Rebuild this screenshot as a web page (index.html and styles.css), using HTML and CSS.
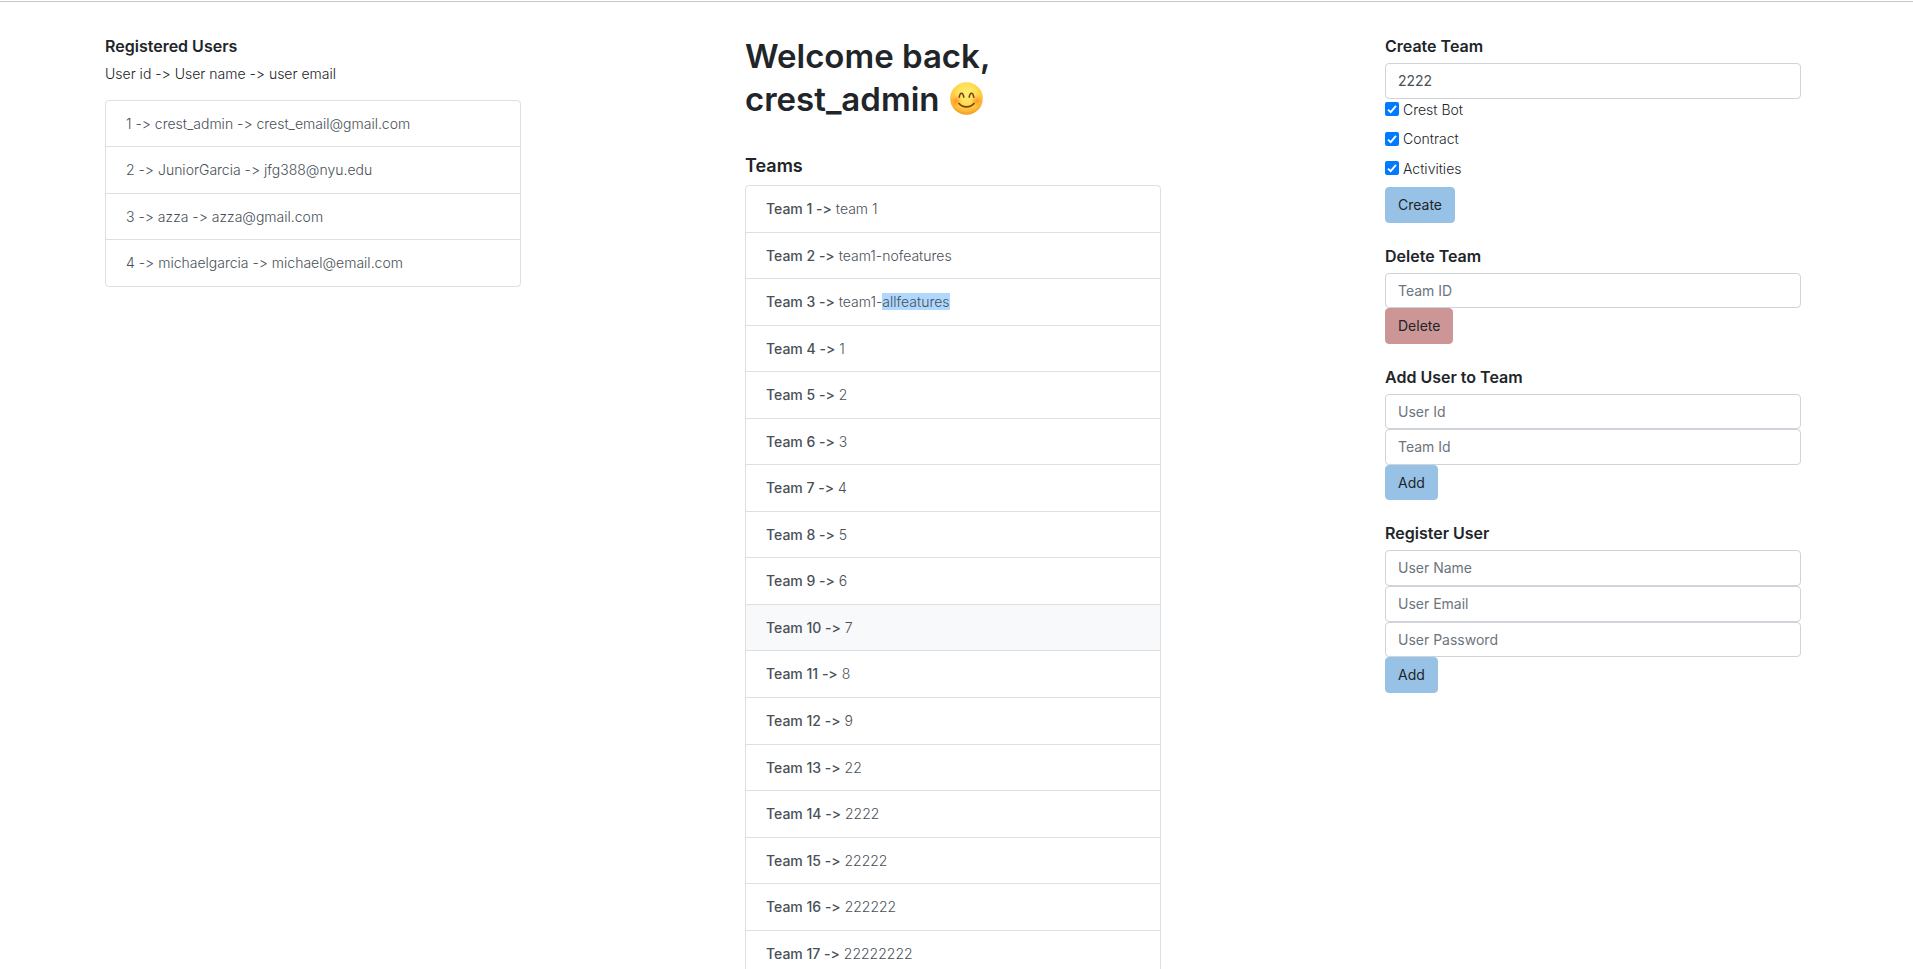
FILE: index.html
```html
<!DOCTYPE html>
<html lang="en">
<head>
<meta charset="utf-8">
<title>Admin</title>
<link rel="stylesheet" href="styles.css">
</head>
<body>
<main class="columns">
  <section class="column">
    <h2 class="heading">Registered Users</h2>
    <p class="hint">User id -&gt; User name -&gt; user email</p>
    <ul class="list">
      <li class="item">1 -&gt; crest_admin -&gt; crest_email@gmail.com</li>
      <li class="item">2 -&gt; JuniorGarcia -&gt; jfg388@nyu.edu</li>
      <li class="item">3 -&gt; azza -&gt; azza@gmail.com</li>
      <li class="item">4 -&gt; michaelgarcia -&gt; michael@email.com</li>
    </ul>
  </section>

  <section class="column">
    <h1 class="welcome">Welcome back, crest_admin
      <svg class="smile" viewBox="0 0 33 33" role="img" aria-label="smiling face">
        <defs>
          <radialGradient id="face" cx="50%" cy="36%" r="66%">
            <stop offset="0" stop-color="#fff07a"/>
            <stop offset="0.5" stop-color="#ffdc50"/>
            <stop offset="0.8" stop-color="#fdb934"/>
            <stop offset="1" stop-color="#ef9320"/>
          </radialGradient>
          <radialGradient id="cheek">
            <stop offset="0" stop-color="#ff8423" stop-opacity="0.85"/>
            <stop offset="1" stop-color="#ff9a2b" stop-opacity="0"/>
          </radialGradient>
        </defs>
        <circle cx="16.5" cy="16.5" r="16.3" fill="url(#face)"/>
        <circle cx="6.2" cy="18.8" r="6" fill="url(#cheek)"/>
        <circle cx="26.8" cy="18.8" r="6" fill="url(#cheek)"/>
        <g fill="none" stroke="#7a4112" stroke-linecap="round">
          <path d="M9.2 15.2c.4-2.6 1.2-4 2.3-4s1.9 1.4 2.3 4" stroke-width="1.6"/>
          <path d="M19.2 15.2c.4-2.6 1.2-4 2.3-4s1.9 1.4 2.3 4" stroke-width="1.6"/>
          <path d="M9 21.5c3.6 4.4 11.4 4.4 15 0" stroke-width="1.7"/>
        </g>
      </svg>
    </h1>
    <h2 class="subheading">Teams</h2>
    <ul class="list">
      <li class="item"><b>Team 1 -&gt;</b> team 1</li>
      <li class="item"><b>Team 2 -&gt;</b> team1-nofeatures</li>
      <li class="item"><b>Team 3 -&gt;</b> team1-<mark>allfeatures</mark></li>
      <li class="item"><b>Team 4 -&gt;</b> 1</li>
      <li class="item"><b>Team 5 -&gt;</b> 2</li>
      <li class="item"><b>Team 6 -&gt;</b> 3</li>
      <li class="item"><b>Team 7 -&gt;</b> 4</li>
      <li class="item"><b>Team 8 -&gt;</b> 5</li>
      <li class="item"><b>Team 9 -&gt;</b> 6</li>
      <li class="item active"><b>Team 10 -&gt;</b> 7</li>
      <li class="item"><b>Team 11 -&gt;</b> 8</li>
      <li class="item"><b>Team 12 -&gt;</b> 9</li>
      <li class="item"><b>Team 13 -&gt;</b> 22</li>
      <li class="item"><b>Team 14 -&gt;</b> 2222</li>
      <li class="item"><b>Team 15 -&gt;</b> 22222</li>
      <li class="item"><b>Team 16 -&gt;</b> 222222</li>
      <li class="item"><b>Team 17 -&gt;</b> 22222222</li>
    </ul>
  </section>

  <section class="column forms">
    <form>
      <h2 class="heading">Create Team</h2>
      <input class="field" type="text" value="2222" aria-label="Team name">
      <label class="check"><input type="checkbox" checked>Crest Bot</label>
      <label class="check"><input type="checkbox" checked>Contract</label>
      <label class="check"><input type="checkbox" checked>Activities</label>
      <button class="btn" type="button">Create</button>
    </form>
    <form>
      <h2 class="heading">Delete Team</h2>
      <input class="field" type="text" placeholder="Team ID" aria-label="Team ID">
      <button class="btn danger" type="button">Delete</button>
    </form>
    <form>
      <h2 class="heading">Add User to Team</h2>
      <input class="field" type="text" placeholder="User Id" aria-label="User Id">
      <input class="field" type="text" placeholder="Team Id" aria-label="Team Id">
      <button class="btn" type="button">Add</button>
    </form>
    <form>
      <h2 class="heading">Register User</h2>
      <input class="field" type="text" placeholder="User Name" aria-label="User Name">
      <input class="field" type="email" placeholder="User Email" aria-label="User Email">
      <input class="field" type="password" placeholder="User Password" aria-label="User Password">
      <button class="btn" type="button">Add</button>
    </form>
  </section>
</main>
</body>
</html>
```

FILE: styles.css
```css
* {
  box-sizing: border-box;
}

html {
  height: 100%;
  overflow: hidden;
  background: #fff;
}

body {
  margin: 0;
  padding-top: 1px;
  font-family: Inter, "Liberation Sans", sans-serif;
  font-size: 14px;
  font-weight: 300;
  font-variant-ligatures: none;
  line-height: 1.54;
  color: #212529;
}

.columns {
  display: grid;
  grid-template-columns: repeat(3, minmax(0, 1fr));
  align-items: start;
  gap: 224px;
  padding: 33px 112px 0 105px;
  border-top: 1px solid #c8c8c8;
}

.heading {
  margin: 0 0 6px;
  font-size: 16px;
  font-weight: 600;
  line-height: 22px;
}

.hint {
  margin: 0 0 15px;
}

.welcome {
  margin: 0 0 33px;
  font-size: 33px;
  font-weight: 600;
  line-height: 43px;
}

.smile {
  width: 33px;
  height: 33px;
  margin-left: 2px;
  vertical-align: -4px;
}

.subheading {
  margin: 0 0 8px;
  font-size: 18px;
  font-weight: 600;
  line-height: 23px;
}

.list {
  margin: 0;
  padding: 0;
  list-style: none;
  border: 1px solid #dfdfdf;
  border-radius: 4px;
}

.item {
  padding: 12px 20px;
  color: #495057;
}

.item + .item {
  border-top: 1px solid #dfdfdf;
}

.item.active {
  background: #f8f9fa;
}

.item b {
  font-weight: 500;
}

.item mark {
  background: #b0d8ff;
  color: inherit;
}

.forms {
  display: grid;
  gap: 22px;
}

.field,
.btn {
  display: block;
  padding: 6px 12px;
  border: 1px solid #ced4da;
  border-radius: 4px;
  font: inherit;
  font-weight: 400;
}

.field {
  width: 100%;
  background: #fff;
  color: #495057;
}

.field::placeholder {
  color: #6c757d;
  opacity: 1;
}

.check {
  display: flex;
  align-items: center;
  gap: 4px;
  margin-bottom: 8px;
}

.check input {
  appearance: none;
  width: 14px;
  height: 14px;
  margin: 0;
  border-radius: 2px;
}

.check input:checked {
  background: #007aff url("data:image/svg+xml,%3Csvg xmlns='http://www.w3.org/2000/svg' viewBox='0 0 14 14'%3E%3Cpath d='M3 7.6 5.7 10.2 11 3.9' fill='none' stroke='white' stroke-width='1.9'/%3E%3C/svg%3E");
}

.btn {
  border-color: #98c1e6;
  background: #98c1e6;
  color: #212529;
}

.btn.danger {
  border-color: #cc9696;
  background: #cc9696;
}
```
